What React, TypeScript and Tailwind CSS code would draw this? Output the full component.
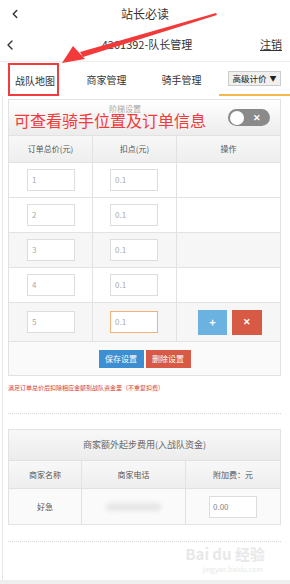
import { ChevronLeft } from 'lucide-react';

const tiers = ['1', '2', '3', '4', '5'];

function Cell({ value, active }: { value: string; active?: boolean }) {
  return (
    <div
      className={`w-[48px] h-[22px] bg-white border text-[8px] text-[#aaa] pl-[4px] flex items-center ${active ? 'border-[#f0b27a]' : 'border-[#ddd]'}`}
    >
      {value}
    </div>
  );
}

export default function App() {
  return (
    <div
      className="relative w-[290px] h-[584px] bg-white overflow-hidden text-[#333]"
      style={{ fontFamily: '"Noto Sans CJK SC", "Liberation Sans", sans-serif' }}
    >
      {/* top bar */}
      <div className="h-[28px] flex items-center relative">
        <ChevronLeft className="w-[14px] h-[14px] ml-[8px]" strokeWidth={2.5} />
        <div className="absolute inset-0 flex items-center justify-center text-[12px] text-[#333]">站长必读</div>
      </div>

      {/* second header */}
      <div className="h-[34px] flex items-center justify-between border-b border-[#eee] relative">
        <ChevronLeft className="w-[16px] h-[16px] ml-[2px] text-[#333]" strokeWidth={2} />
        <div className="absolute inset-0 flex items-center justify-center text-[11px] pl-[4px]">4201392-队长管理</div>
        <span className="text-[11px] underline mr-[8px]">注销</span>
      </div>

      {/* tabs */}
      <div className="h-[34px] flex items-center relative">
        <div className="w-[56px] flex justify-center text-[10px] ml-[7px] mt-[2px]">战队地图</div>
        <div className="w-[75px] flex justify-center text-[10px] ml-[6px]">商家管理</div>
        <div className="w-[75px] flex justify-center text-[10px]">骑手管理</div>
        <div className="flex-1 flex justify-center h-full items-center border-b-2 border-[#f5b84d]">
          <div className="h-[15px] px-[3px] flex items-center gap-[3px] bg-[#f0f0f0] border border-[#ccc] text-[8.5px] text-[#222]">
            高级计价<span className="text-[7px]">▼</span>
          </div>
        </div>
        <div className="absolute left-[8px] top-[1px] w-[51px] h-[33px] border-2 border-[#f03c3c]" />
      </div>

      {/* content */}
      <div className="border-l border-[#e6e6e6] ml-[2px] pl-[5px] pr-[9px] pt-[3px] pb-[10px]">
        <div className="border border-[#e2e2e2]">
          <div className="h-[36px] bg-gradient-to-b from-white to-[#ececec] flex items-center justify-between relative border-b border-[#e2e2e2]">
            <span className="absolute left-[100px] top-[3px] text-[8px] text-[#aaa]">阶梯设置</span>
            <span className="text-[16px] font-normal text-[#f23a3a] ml-[5px] mt-[4px] relative">可查看骑手位置及订单信息</span>
            <div className="w-[42px] h-[17px] rounded-full bg-[#8a8a8a] mr-[10px] flex items-center px-[2px] relative">
              <div className="w-[14px] h-[14px] rounded-full bg-white" />
              <span className="absolute right-[9px] text-[9px] font-bold text-white leading-none">✕</span>
            </div>
          </div>
          <div className="grid grid-cols-[84px_84px_1fr] h-[27px] bg-gradient-to-b from-[#f8f8f8] to-[#eee] text-[8px] text-[#555] border-b border-[#e2e2e2]">
            <div className="flex items-center justify-center border-r border-[#e2e2e2]">订单总价(元)</div>
            <div className="flex items-center justify-center border-r border-[#e2e2e2]">扣点(元)</div>
            <div className="flex items-center justify-center">操作</div>
          </div>
          {tiers.map((t, i) => (
            <div
              key={t}
              className={`grid grid-cols-[84px_84px_1fr] border-b border-[#e2e2e2] ${i === 4 ? 'h-[39px]' : 'h-[35px]'} ${i === 2 || i === 4 ? 'bg-[#f6f6f6]' : 'bg-white'}`}
            >
              <div className="flex items-center pl-[18px] border-r border-[#e2e2e2]">
                <Cell value={t} />
              </div>
              <div className="flex items-center pl-[17px] border-r border-[#e2e2e2]">
                <Cell value="0.1" active={i === 4} />
              </div>
              <div className="flex items-center pl-[21px] gap-[5px]">
                {i === 4 && (
                  <>
                    <div className="w-[29px] h-[25px] bg-[#6bb2e0] text-white text-[11px] font-bold flex items-center justify-center">+</div>
                    <div className="w-[30px] h-[25px] bg-[#d75a45] text-white text-[9px] font-bold flex items-center justify-center">✕</div>
                  </>
                )}
              </div>
            </div>
          ))}
          <div className="h-[33px] flex items-center justify-center gap-[2px] bg-[#fafafa]">
            <div className="w-[45px] h-[18px] bg-[#3d8fd1] text-white text-[8px] flex items-center justify-center">保存设置</div>
            <div className="w-[45px] h-[18px] bg-[#d65a45] text-white text-[8px] flex items-center justify-center">删除设置</div>
          </div>
        </div>

        <div className="text-[6px] text-[#d23a3a] mt-[7px] whitespace-nowrap">满足订单总价后扣除相应金额到战队资金里（不重复扣费）</div>

        <div className="mt-[21px] border-t border-dotted border-[#d8d8d8]" />

        <div className="mt-[15px] border border-[#e2e2e2]">
          <div className="h-[31px] bg-gradient-to-b from-[#f8f8f8] to-[#ececec] flex items-center justify-center text-[9px] text-[#666] border-b border-[#e2e2e2]">
            商家额外起步费用(入战队资金)
          </div>
          <div className="grid grid-cols-[73px_104px_1fr] h-[28px] bg-gradient-to-b from-[#f8f8f8] to-[#eee] text-[8px] text-[#555] border-b border-[#e2e2e2]">
            <div className="flex items-center justify-center border-r border-[#e2e2e2]">商家名称</div>
            <div className="flex items-center justify-center border-r border-[#e2e2e2]">商家电话</div>
            <div className="flex items-center justify-center">附加费：元</div>
          </div>
          <div className="grid grid-cols-[73px_104px_1fr] h-[35px] text-[8px] text-[#555] bg-[#fafafa]">
            <div className="flex items-center justify-center border-r border-[#e2e2e2]">好急</div>
            <div className="flex items-center justify-center border-r border-[#e2e2e2]">
              <div className="w-[55px] h-[8px] rounded-full bg-[#e6e6e6] blur-[2px]" />
            </div>
            <div className="flex items-center justify-center">
              <div className="w-[48px] h-[22px] bg-white border border-[#ddd] text-[8px] text-[#888] pl-[3px] flex items-center">0.00</div>
            </div>
          </div>
        </div>

        <div className="mt-[16px] border-t border-dotted border-[#d8d8d8]" />
        <div className="h-[38px] flex flex-col items-end pr-[16px] pt-[4px] text-[#e8e8e8]">
          <div className="text-[15px] font-bold leading-[16px]">Bai du 经验</div>
          <div className="text-[7px] leading-[9px] mt-[3px] mr-[2px]">jingyan.baidu.com</div>
        </div>
      </div>
      <div className="absolute bottom-0 left-0 right-0 h-[4px] bg-[#eee]" />

      {/* annotation arrow */}
      <svg className="absolute left-0 top-0 pointer-events-none" width="290" height="100">
        <polygon points="216,13 80,52 83,57 217,15" fill="#f23a3a" />
        <polygon points="62,63 73,46 85,59" fill="#f23a3a" />
      </svg>
    </div>
  );
}
